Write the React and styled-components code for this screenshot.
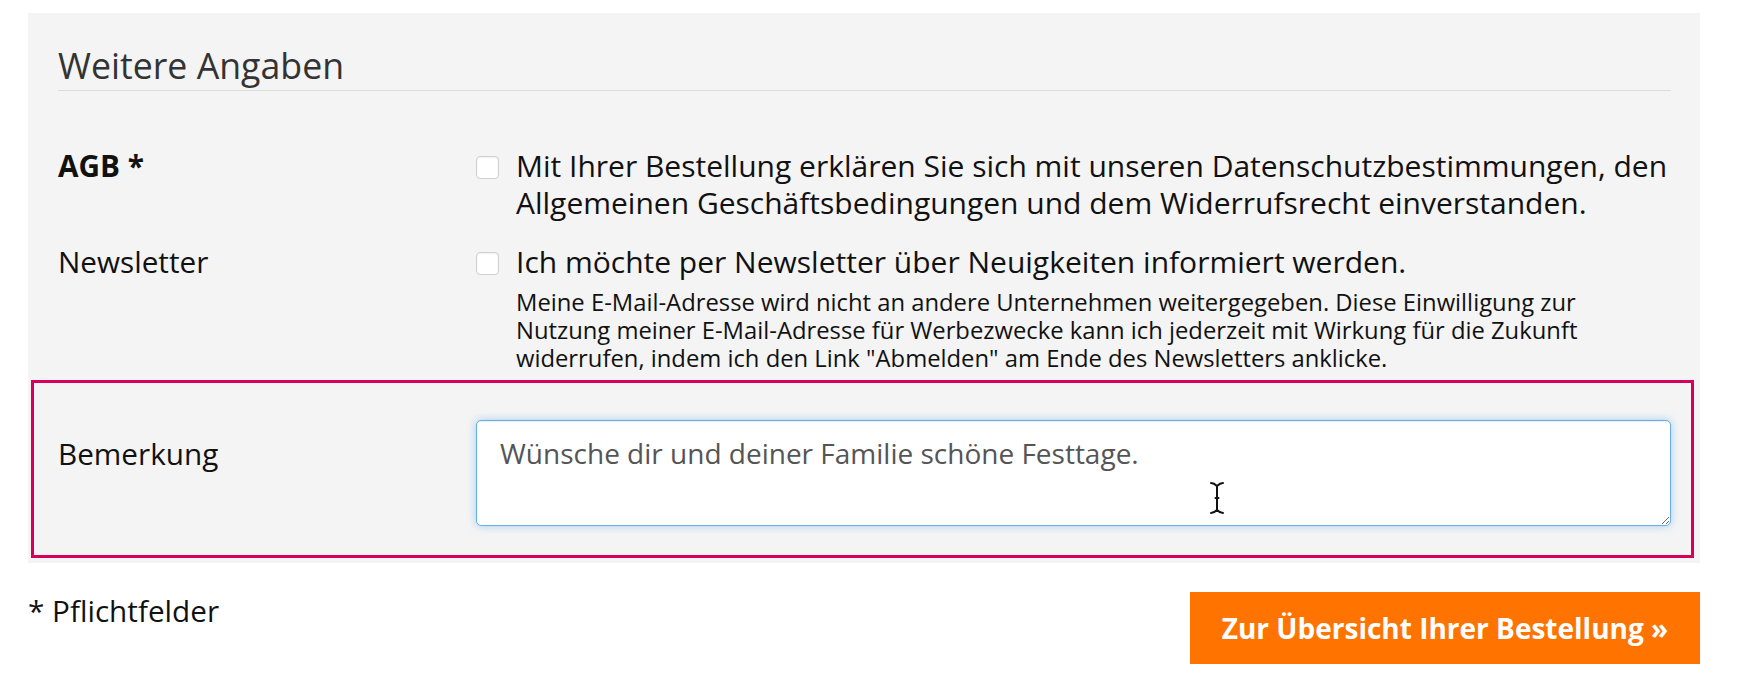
import styled, { createGlobalStyle } from "styled-components";

const GlobalStyle = createGlobalStyle`
  body {
    margin: 0;
    background: #fff;
    font-family: "Open Sans", "DejaVu Sans", sans-serif;
    color: #111;
  }
`;

const Page = styled.div`
  width: 1672px;
  padding: 13px 0 0 28px;
`;

const Panel = styled.section`
  background: #f4f4f4;
  padding: 0 29px 5px 30px;
`;

const Heading = styled.h2`
  margin: 0;
  padding: 29px 0 2px;
  font-size: 35.7px;
  line-height: 46px;
  font-weight: 400;
  color: #333;
  border-bottom: 1px solid #dcdcdc;
`;

const Row = styled.div`
  display: flex;
  align-items: flex-start;
  margin-top: ${(p) => p.gap || 0}px;
`;

const Label = styled.div`
  flex: 0 0 418px;
  font-size: 29.7px;
  line-height: 37px;
  font-weight: ${(p) => (p.bold ? 700 : 400)};
  margin-top: ${(p) => p.offset || 0}px;
`;

const Field = styled.div`
  flex: 1;
  min-width: 0;
`;

const CheckLine = styled.label`
  display: flex;
  align-items: flex-start;
  gap: 17px;
  font-size: 30px;
  line-height: 37px;
  color: #111;
  white-space: nowrap;
`;

const Box = styled.span`
  flex: 0 0 auto;
  width: 21px;
  height: 21px;
  margin-top: 9px;
  border: 1px solid #cfcfcf;
  border-radius: 4px;
  background: #fff;
  box-shadow: inset 0 1px 2px rgba(0, 0, 0, 0.06);
`;

const Hint = styled.p`
  margin: 8px 0 0 40px;
  font-size: 23.8px;
  line-height: 28px;
  color: #111;
  white-space: nowrap;
`;

const Highlight = styled.div`
  display: flex;
  align-items: flex-start;
  margin: 8px -23px 0 -27px;
  padding: 37px 20px 29px 24px;
  border: 3px solid #d6005c;
`;

const AreaWrap = styled.div`
  position: relative;
  flex: 1;
  display: flex;
`;

const Area = styled.textarea`
  flex: 1;
  height: 106px;
  box-sizing: border-box;
  padding: 14px 23px;
  font-family: "Open Sans", sans-serif;
  font-size: 28px;
  line-height: 37px;
  color: #555;
  background: #fff;
  border: 1px solid #66afe9;
  border-radius: 5px;
  outline: none;
  box-shadow: inset 0 1px 1px rgba(0, 0, 0, 0.075), 0 0 9px rgba(102, 175, 233, 0.55);
  resize: vertical;
`;

const Cursor = styled.svg`
  position: absolute;
  left: 733px;
  top: 61px;
  pointer-events: none;
`;

const Footer = styled.div`
  display: flex;
  justify-content: space-between;
  align-items: flex-start;
  margin-top: 29px;
`;

const Note = styled.div`
  font-size: 29.7px;
  line-height: 37px;
  color: #111;
`;

const Submit = styled.button`
  width: 510px;
  height: 72px;
  border: 0;
  border-radius: 0;
  background: #ff7400;
  color: #fff;
  font-family: "Open Sans", sans-serif;
  font-size: 28px;
  font-weight: 700;
  cursor: pointer;
`;

function IBeam() {
  return (
    <Cursor width="16" height="34" viewBox="0 0 16 34">
      <g fill="none" stroke="#fff" strokeWidth="4" strokeLinecap="round" opacity="0.7">
        <path d="M2 2 Q5 2 8 5 Q11 2 14 2 M8 5 V29 M2 32 Q5 32 8 29 Q11 32 14 32" />
      </g>
      <g fill="none" stroke="#111" strokeWidth="2" strokeLinecap="round">
        <path d="M2 2 Q5 2 8 5 Q11 2 14 2 M8 5 V29 M2 32 Q5 32 8 29 Q11 32 14 32 M6.5 17 H9.5" />
      </g>
    </Cursor>
  );
}

export default function App() {
  return (
    <>
      <GlobalStyle />
      <Page>
        <Panel>
          <Heading>Weitere Angaben</Heading>
          <Row gap={56}>
            <Label bold>AGB *</Label>
            <Field>
              <CheckLine>
                <Box />
                <span>
                  Mit Ihrer Bestellung erklären Sie sich mit unseren Datenschutzbestimmungen, den
                  <br />
                  Allgemeinen Geschäftsbedingungen und dem Widerrufsrecht einverstanden.
                </span>
              </CheckLine>
            </Field>
          </Row>
          <Row gap={22}>
            <Label>Newsletter</Label>
            <Field>
              <CheckLine>
                <Box />
                <span>Ich möchte per Newsletter über Neuigkeiten informiert werden.</span>
              </CheckLine>
              <Hint>
                Meine E-Mail-Adresse wird nicht an andere Unternehmen weitergegeben. Diese Einwilligung zur
                <br />
                Nutzung meiner E-Mail-Adresse für Werbezwecke kann ich jederzeit mit Wirkung für die Zukunft
                <br />
                widerrufen, indem ich den Link "Abmelden" am Ende des Newsletters anklicke.
              </Hint>
            </Field>
          </Row>
          <Highlight>
            <Label offset={15}>Bemerkung</Label>
            <AreaWrap>
              <Area defaultValue="Wünsche dir und deiner Familie schöne Festtage." />
              <IBeam />
            </AreaWrap>
          </Highlight>
        </Panel>
        <Footer>
          <Note>* Pflichtfelder</Note>
          <Submit type="button">Zur Übersicht Ihrer Bestellung »</Submit>
        </Footer>
      </Page>
    </>
  );
}
